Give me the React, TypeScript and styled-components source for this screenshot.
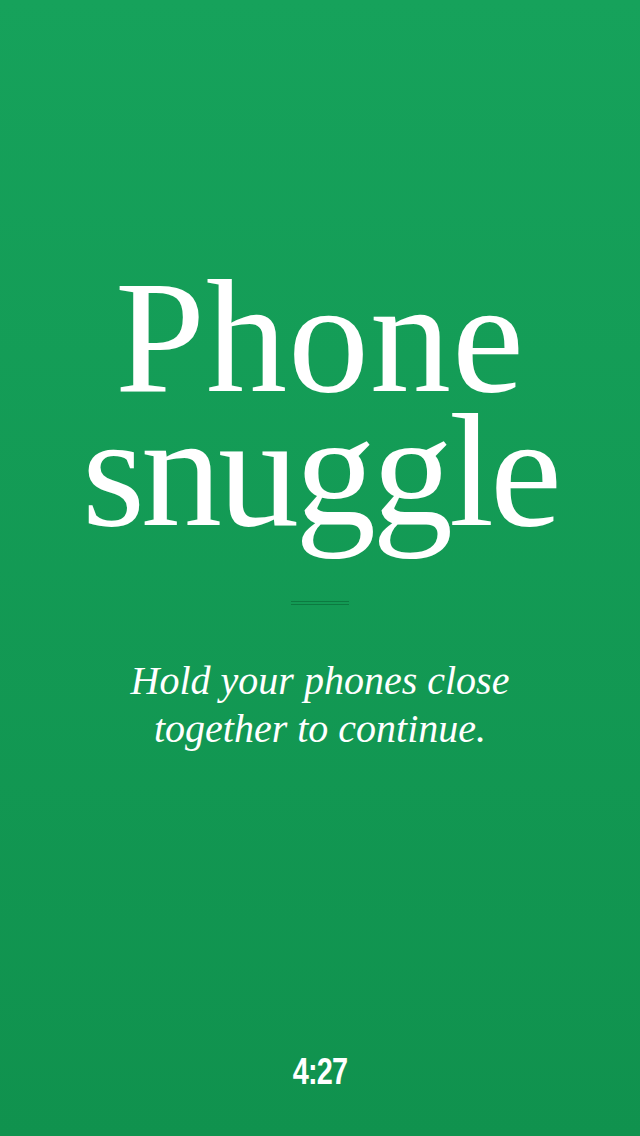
import styled, { createGlobalStyle } from 'styled-components';

const GlobalStyle = createGlobalStyle`
  html, body {
    margin: 0;
    padding: 0;
  }
  body {
    background: #12964f;
  }
`;

const Screen = styled.main`
  display: flex;
  flex-direction: column;
  align-items: center;
  box-sizing: border-box;
  width: 100%;
  min-height: 100vh;
  padding: 270px 0 44px;
  background: linear-gradient(180deg, #16a25b 0%, #10924e 100%);
  color: #fff;
`;

const Title = styled.h1`
  display: flex;
  flex-direction: column;
  align-items: center;
  margin: 0;
  font-family: 'Liberation Serif', 'DejaVu Serif', serif;
  font-weight: 400;
  font-size: 162px;
  line-height: 134px;
`;

const TitleLine = styled.span<{ $spacing: number }>`
  display: block;
  letter-spacing: ${(p) => p.$spacing}px;
  white-space: nowrap;
`;

const Divider = styled.div`
  width: 58px;
  height: 2px;
  margin-top: 63px;
  border-top: 1px solid #0c7a40;
  border-bottom: 1px solid #0c7a40;
`;

const Hint = styled.p`
  margin: 52px 0 0;
  font-family: 'Liberation Serif', 'DejaVu Serif', serif;
  font-style: italic;
  font-size: 40px;
  line-height: 48px;
  text-align: center;
`;

const Timer = styled.div`
  margin-top: auto;
  font-family: 'Liberation Sans Narrow', 'Liberation Sans', 'Roboto', sans-serif;
  font-stretch: condensed;
  font-weight: 700;
  font-size: 37px;
  line-height: 40px;
  letter-spacing: -1px;
  transform: scaleX(0.78);
`;

export default function App() {
  return (
    <>
      <GlobalStyle />
      <Screen>
        <Title>
          <TitleLine $spacing={1}>Phone</TitleLine>
          <TitleLine $spacing={-4}>snuggle</TitleLine>
        </Title>
        <Divider />
        <Hint>
          Hold your phones close
          <br />
          together to continue.
        </Hint>
        <Timer>4:27</Timer>
      </Screen>
    </>
  );
}
